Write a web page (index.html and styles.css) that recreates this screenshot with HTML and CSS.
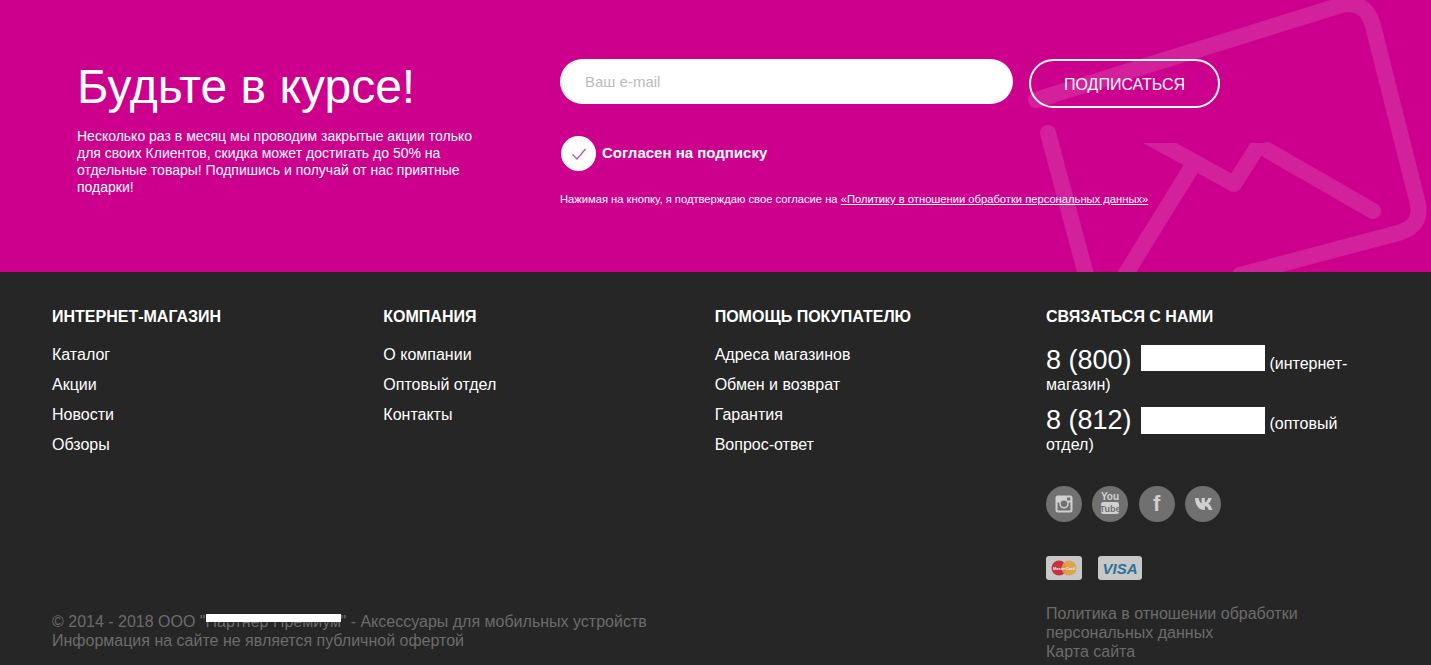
FILE: index.html
```html
<!DOCTYPE html>
<html lang="ru">
<head>
<meta charset="UTF-8" />
<meta name="viewport" content="width=device-width, initial-scale=1" />
<title>Будьте в курсе</title>
<link rel="stylesheet" href="styles.css">
</head>
<body>

<section class="subscribe">
  <svg class="envelope" width="431" height="272" viewBox="1000 0 431 272" aria-hidden="true">
    <clipPath id="flap-clip"><rect x="1000" y="143" width="431" height="129" /></clipPath>
    <path d="M1036 100 L1338 6 Q1366 -2 1373 26 L1417 200 Q1424 226 1398 233 L1240 275" />
    <path d="M1048 133 L1086 275" />
    <path d="M1330 33 L1234 184 L1140 132" clip-path="url(#flap-clip)" />
    <path d="M1267 150 L1373 211" />
    <path d="M1190 170 L1125 275" />
  </svg>

  <div class="subscribe-text">
    <h1>Будьте в курсе!</h1>
    <p>Несколько раз в месяц мы проводим закрытые акции только для своих Клиентов, скидка может достигать до 50% на отдельные товары! Подпишись и получай от нас приятные подарки!</p>
  </div>

  <form class="subscribe-form">
    <div class="form-row">
      <input type="text" class="email-input" placeholder="Ваш e-mail">
      <button type="button" class="subscribe-btn">ПОДПИСАТЬСЯ</button>
    </div>
    <label class="agree">
      <span class="agree-check">
        <svg width="16" height="14" viewBox="0 0 16 14"><path d="M1.5 7.5 L6 12 L14.5 2" /></svg>
      </span>
      <span class="agree-text">Согласен на подписку</span>
    </label>
    <div class="form-note">Нажимая на кнопку, я подтверждаю свое согласие на <a href="#">«Политику в отношении обработки персональных данных»</a></div>
  </form>
</section>

<footer class="footer">
  <div class="footer-left">
    <div class="footer-menus">
      <div class="footer-col">
        <h3>Интернет-магазин</h3>
        <a href="#">Каталог</a>
        <a href="#">Акции</a>
        <a href="#">Новости</a>
        <a href="#">Обзоры</a>
      </div>
      <div class="footer-col">
        <h3>Компания</h3>
        <a href="#">О компании</a>
        <a href="#">Оптовый отдел</a>
        <a href="#">Контакты</a>
      </div>
      <div class="footer-col">
        <h3>Помощь покупателю</h3>
        <a href="#">Адреса магазинов</a>
        <a href="#">Обмен и возврат</a>
        <a href="#">Гарантия</a>
        <a href="#">Вопрос-ответ</a>
      </div>
    </div>
    <div class="copyright">
      © 2014 - 2018 ООО "<span class="hidden-name">Партнер Премиум</span>" - Аксессуары для мобильных устройств<br>
      Информация на сайте не является публичной офертой
    </div>
  </div>

  <div class="footer-contacts">
    <h3>Связаться с нами</h3>
    <div class="phone"><span class="phone-num">8 (800)</span> <span class="hidden-phone"></span> (интернет-магазин)</div>
    <div class="phone"><span class="phone-num">8 (812)</span> <span class="hidden-phone hidden-phone-low"></span> (оптовый отдел)</div>

    <div class="socials">
      <a href="#" class="social">
        <svg width="20" height="20" viewBox="0 0 20 20">
          <path class="icon-fill" fill-rule="evenodd" d="M4 1.500h12a2.500 2.500 0 0 1 2.500 2.500v12a2.500 2.500 0 0 1-2.500 2.500H4A2.500 2.500 0 0 1 1.500 16V4A2.500 2.500 0 0 1 4 1.500zM13 3.500v3h3.300v-3zM3.500 8.500V16.500h13V8.500h-2a4.700 4.700 0 1 1-9 0zM10 6.500a3.300 3.300 0 1 0 0 6.600 3.300 3.300 0 0 0 0-6.600z" />
        </svg>
      </a>
      <a href="#" class="social">
        <svg width="24" height="28" viewBox="0 0 24 28">
          <text x="12" y="10" class="yt-top">You</text>
          <rect class="icon-fill" x="3" y="12" width="18" height="12" rx="2.500" />
          <text x="12" y="22" class="yt-bottom">Tube</text>
        </svg>
      </a>
      <a href="#" class="social"><span class="fb">f</span></a>
      <a href="#" class="social">
        <svg width="21" height="12" viewBox="0 0 21 12">
          <path class="icon-fill" d="M0 0h3.600c.3 2.600 1.700 5 3 5.500V0h3.300v4.400C11.300 4.200 12.700 2 13.300 0h3.300c-.5 2.600-2 4.700-3.300 5.700 1.500.8 3.400 3 4.100 6.300h-3.600c-.6-2-2.100-3.700-3.900-3.900V12H9C4 12 .4 7.500 0 0z" transform="translate(2 0)" />
        </svg>
      </a>
    </div>

    <div class="cards">
      <span class="card card-mc">
        <svg width="28" height="16" viewBox="0 0 28 16">
          <circle cx="9" cy="8" r="7.500" fill="#c8313f" />
          <circle cx="19" cy="8" r="7.500" fill="#dca13f" fill-opacity="0.9" />
          <text x="14" y="9.500" class="mc-text">MasterCard</text>
        </svg>
      </span>
      <span class="card card-visa">VISA</span>
    </div>

    <div class="footer-links">
      <a href="#">Политика в отношении обработки персональных данных</a>
      <a href="#">Карта сайта</a>
    </div>
  </div>
</footer>

</body>
</html>
```

FILE: styles.css
```css
* {
  box-sizing: border-box;
}
html, body {
  height: 665px;
  overflow: hidden;
}
body {
  margin: 0;
  font-family: 'Liberation Sans', Arial, sans-serif;
  color: #fff;
  background: #262626;
}
a {
  color: inherit;
  text-decoration: none;
}

/* Pink subscribe block */
.subscribe {
  position: relative;
  display: flex;
  height: 272px;
  padding: 59px 0 0 77px;
  background: #cc008c;
  overflow: hidden;
}
.envelope {
  position: absolute;
  top: 0;
  right: 0;
  opacity: 0.13;
}
.envelope path {
  fill: none;
  stroke: #fff;
  stroke-width: 16;
  stroke-linecap: round;
  stroke-linejoin: round;
}
.subscribe-text {
  position: relative;
  width: 483px;
  flex: none;
}
.subscribe-text h1 {
  margin: 0 0 14px;
  font-size: 48px;
  font-weight: 400;
  line-height: 55px;
}
.subscribe-text p {
  width: 410px;
  margin: 0;
  font-size: 14px;
  line-height: 17px;
}
.subscribe-form {
  position: relative;
}
.form-row {
  display: flex;
  align-items: flex-start;
  gap: 16px;
}
.email-input {
  width: 453px;
  height: 45px;
  padding: 0 25px;
  border: none;
  border-radius: 23px;
  background: #fff;
  font-family: inherit;
  font-size: 15px;
}
.email-input::placeholder {
  color: #bbb;
}
.subscribe-btn {
  width: 191px;
  height: 49px;
  padding: 2px 0 0;
  border: 2px solid #fff;
  border-radius: 25px;
  background: transparent;
  color: #fff;
  font-family: inherit;
  font-size: 16px;
}
.agree {
  display: flex;
  align-items: center;
  gap: 6px;
  margin-top: 28px;
  padding-left: 1px;
  font-size: 15px;
  font-weight: 700;
}
.agree-text {
  margin-top: -2px;
}
.agree-check {
  display: flex;
  align-items: center;
  justify-content: center;
  width: 35px;
  height: 35px;
  border-radius: 50%;
  background: #fff;
}
.agree-check path {
  fill: none;
  stroke: #b5589b;
  stroke-width: 1.300;
}
.form-note {
  margin-top: 22px;
  font-size: 11.200px;
  line-height: 13px;
}
.form-note a {
  text-decoration: underline;
}

/* Dark footer */
.footer {
  display: flex;
  height: 393px;
  padding: 35px 0 0 52px;
}
.footer-left {
  display: flex;
  flex-direction: column;
  justify-content: space-between;
  width: 994px;
  flex: none;
  padding-bottom: 15px;
}
.footer-menus {
  display: flex;
}
.footer-col {
  width: 331.500px;
}
.footer-col a {
  display: block;
  font-size: 16px;
  line-height: 30px;
}
.footer h3 {
  margin: 0 0 13px;
  font-size: 16px;
  line-height: 20px;
  font-weight: 700;
  text-transform: uppercase;
}
.footer-contacts h3 {
  margin-bottom: 18px;
}
.copyright {
  color: #6c6c6c;
  font-size: 16px;
  line-height: 19px;
}
/* white blot over the company name */
.hidden-name {
  position: relative;
  display: inline-block;
  width: 135px;
  white-space: nowrap;
}
.hidden-name::after {
  content: '';
  position: absolute;
  top: 2px;
  left: 0;
  width: 135px;
  height: 8px;
  background: #fff;
}
.footer-contacts {
  width: 320px;
}
.phone {
  font-size: 16px;
  line-height: 20px;
  margin-bottom: 10px;
}
.phone-num {
  font-size: 27px;
  line-height: 30px;
}
.hidden-phone {
  display: inline-block;
  width: 124px;
  height: 26px;
  margin-left: 5px;
  vertical-align: -2px;
  background: #fff;
}
.hidden-phone-low {
  height: 27px;
  vertical-align: -5px;
}

.socials {
  display: flex;
  gap: 10.400px;
  margin-top: 31px;
}
.social {
  display: flex;
  align-items: center;
  justify-content: center;
  width: 36px;
  height: 36px;
  border-radius: 50%;
  background: #707070;
}
.icon-fill {
  fill: #d0d0d0;
}
.yt-top, .yt-bottom {
  font-family: 'Liberation Sans', sans-serif;
  font-weight: 700;
  text-anchor: middle;
}
.yt-top {
  font-size: 10px;
  fill: #d0d0d0;
}
.yt-bottom {
  font-size: 9px;
  fill: #707070;
}
.fb {
  color: #d0d0d0;
  font-size: 22px;
  font-weight: 700;
  line-height: 36px;
}

.cards {
  display: flex;
  gap: 16px;
  margin-top: 34px;
}
.card {
  display: flex;
  align-items: center;
  justify-content: center;
  height: 24px;
  border-radius: 3px;
  background: #c8c8c8;
}
.card-mc {
  width: 36px;
}
.mc-text {
  font-family: 'Liberation Sans', sans-serif;
  font-size: 4px;
  font-weight: 700;
  fill: #eee;
  text-anchor: middle;
}
.card-visa {
  width: 44px;
  color: #2f6f98;
  font-size: 15px;
  font-weight: 700;
  font-style: italic;
}
.footer-links {
  margin-top: 24px;
  color: #6c6c6c;
  font-size: 16px;
  line-height: 19px;
}
.footer-links a {
  display: block;
}
```
